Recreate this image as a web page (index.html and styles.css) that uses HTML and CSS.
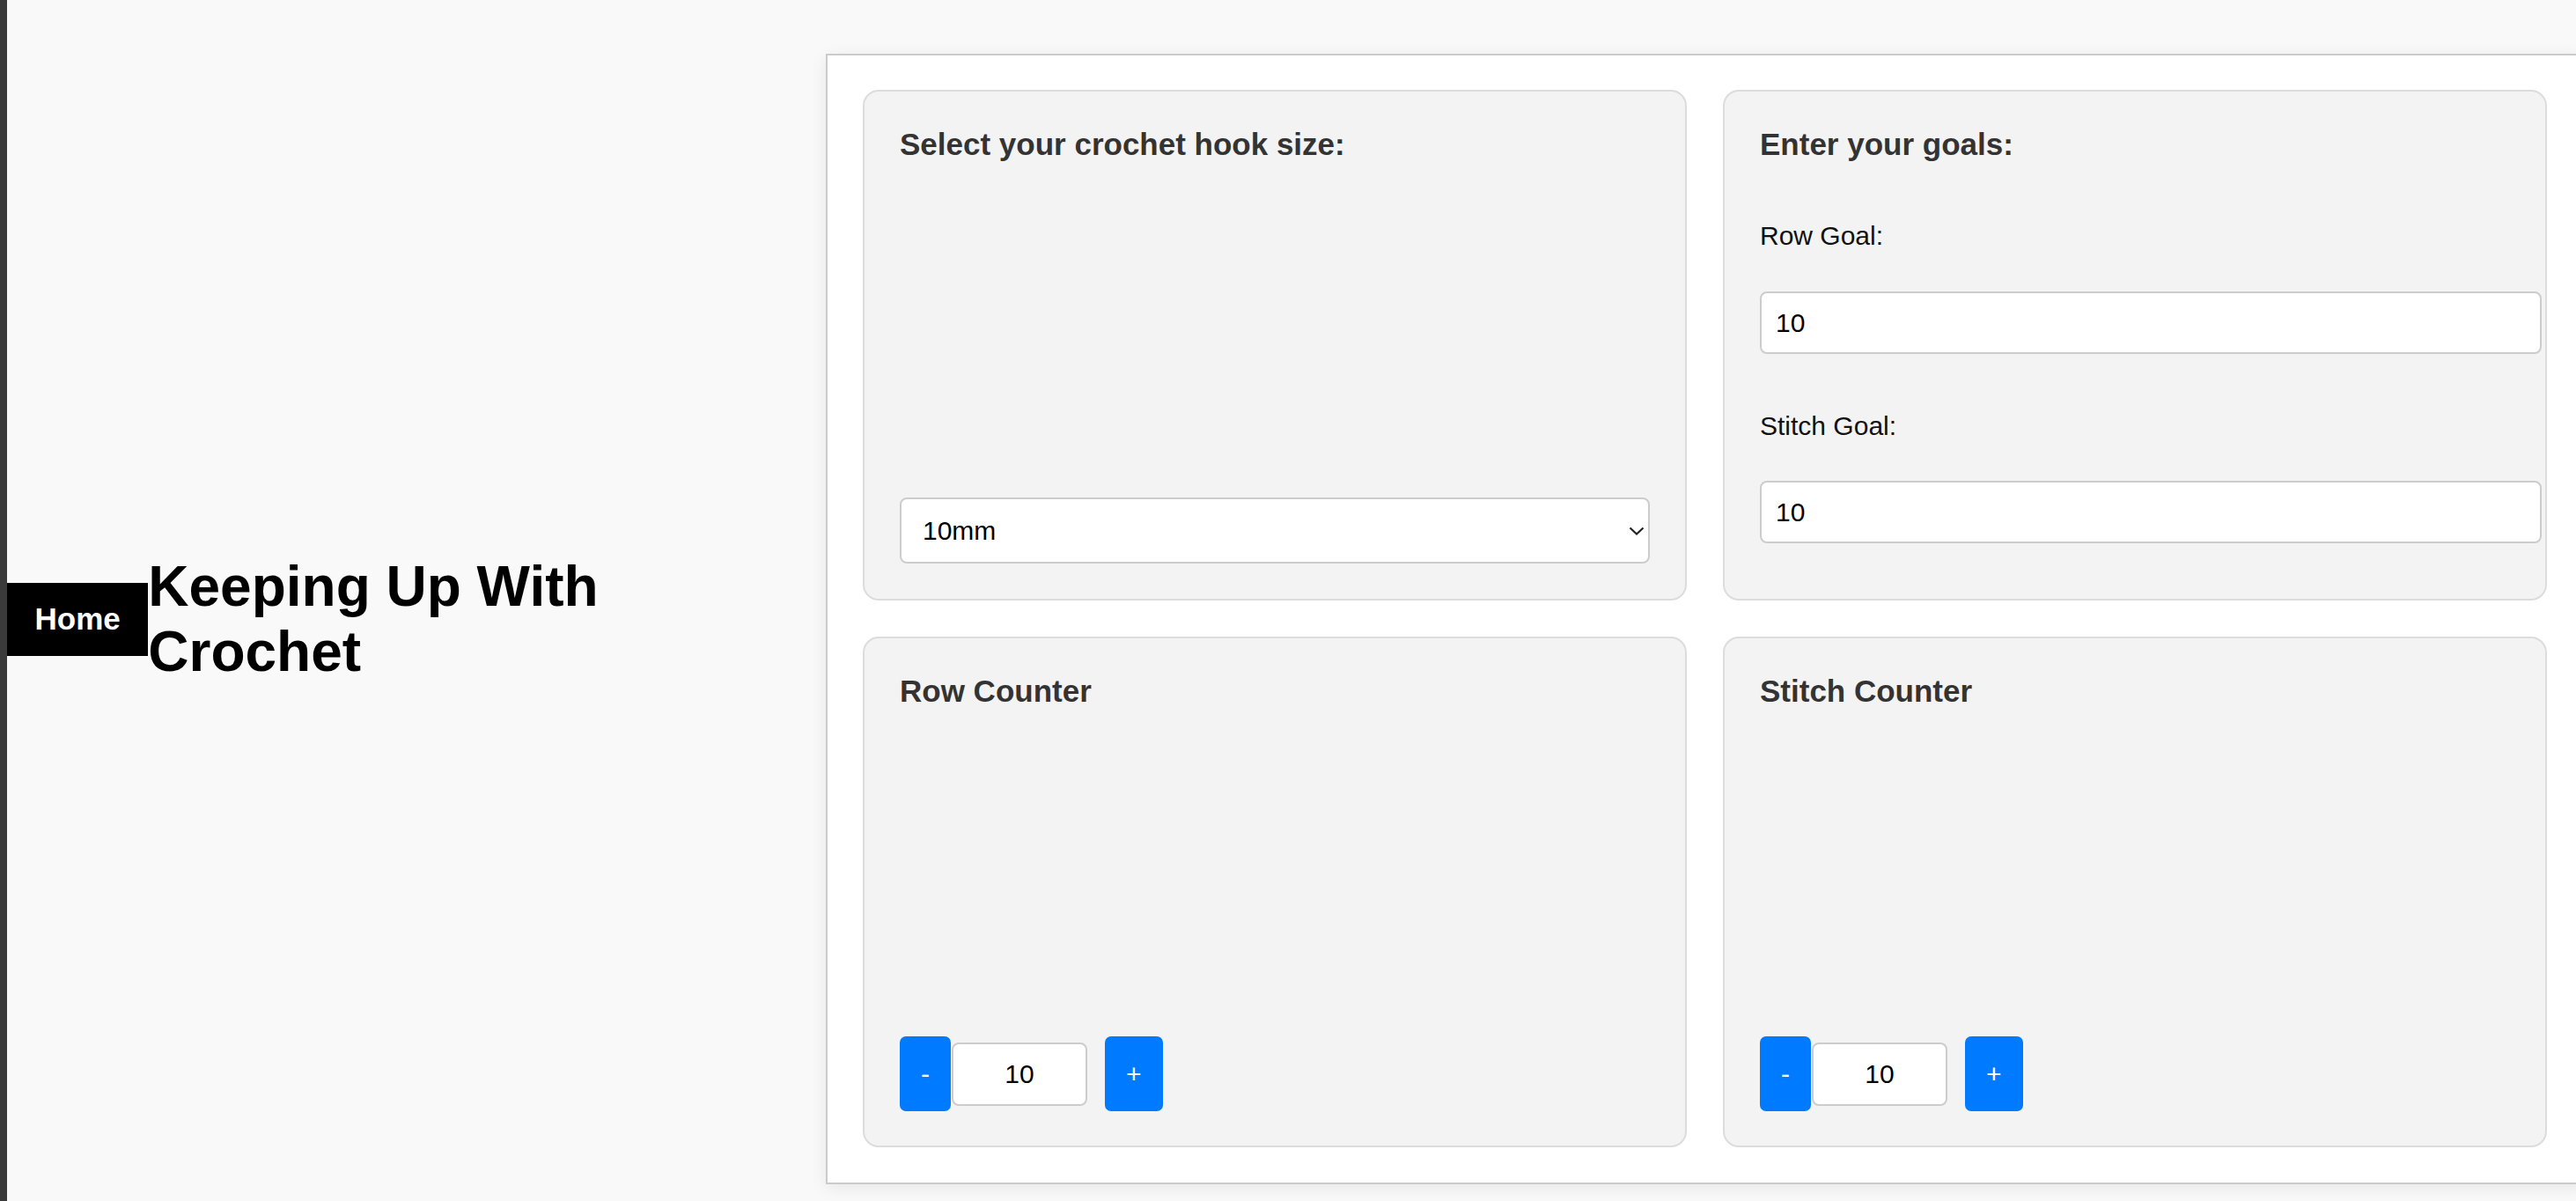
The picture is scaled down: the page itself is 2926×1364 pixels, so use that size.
FILE: index.html
```html
<!DOCTYPE html>
<html lang="en">
<head>
    <meta charset="UTF-8">
    <meta name="viewport" content="width=device-width, initial-scale=1.0">
    <title>Keeping Up With Crochet</title>
    <link rel="stylesheet" href="styles.css">
</head>
<body>
    <div class="page">
        <header class="site-header">
            <a href="#" class="home-link">Home</a>
            <h1 class="site-title">Keeping Up With Crochet</h1>
        </header>

        <main class="tracker">
            <section class="card card-hook">
                <h3>Select your crochet hook size:</h3>
                <div class="select-wrap">
                    <select id="hook" class="hook-select">
                        <option value="2">2mm</option>
                        <option value="3">3mm</option>
                        <option value="4">4mm</option>
                        <option value="5">5mm</option>
                        <option value="6">6mm</option>
                        <option value="8">8mm</option>
                        <option value="10" selected>10mm</option>
                    </select>
                    <svg class="chevron" width="18" height="10" viewBox="0 0 18 10">
                        <polyline points="1.5,1.5 9,8.5 16.5,1.5" fill="none" stroke="#222" stroke-width="2.2"/>
                    </svg>
                </div>
            </section>

            <section class="card card-goals">
                <h3>Enter your goals:</h3>
                <label for="rowGoal">Row Goal:</label>
                <input type="number" id="rowGoal" class="goal-input" value="10">
                <label for="stitchGoal">Stitch Goal:</label>
                <input type="number" id="stitchGoal" class="goal-input" value="10">
            </section>

            <section class="card card-counter">
                <h3>Row Counter</h3>
                <div class="counter">
                    <button type="button" class="count-btn" onclick="changeCount('rowCount', -1)">-</button>
                    <input type="text" id="rowCount" class="count-input" value="10" readonly>
                    <button type="button" class="count-btn" onclick="changeCount('rowCount', 1)">+</button>
                </div>
            </section>

            <section class="card card-counter">
                <h3>Stitch Counter</h3>
                <div class="counter">
                    <button type="button" class="count-btn" onclick="changeCount('stitchCount', -1)">-</button>
                    <input type="text" id="stitchCount" class="count-input" value="10" readonly>
                    <button type="button" class="count-btn" onclick="changeCount('stitchCount', 1)">+</button>
                </div>
            </section>
        </main>
    </div>

    <script>
        // bump a counter up or down, never below zero
        function changeCount(id, step) {
            var field = document.getElementById(id);
            var value = parseInt(field.value) + step;
            if (value < 0) value = 0;
            field.value = value;
        }
    </script>
</body>
</html>
```

FILE: styles.css
```css
html, body {
    margin: 0;
    overflow: hidden;
}
body {
    font-family: Arial, "Liberation Sans", sans-serif;
    background-color: #f9f9f9;
    color: #000;
    border-left: 8px solid #3a3a3a;
    min-height: 1364px;
    box-sizing: border-box;
}
.page {
    display: flex;
    align-items: center;
    padding-top: 61px;
}
.site-header {
    flex: 0 0 930px;
    display: flex;
    align-items: center;
}
.home-link {
    flex-shrink: 0;
    background-color: #000;
    color: #fff;
    text-decoration: none;
    font-weight: bold;
    font-size: 35px;
    padding: 21.5px 31.5px;
}
.site-title {
    margin: 0;
    max-width: 700px;
    font-size: 64px;
    font-weight: bold;
}
.tracker {
    flex: 0 0 1997px;
    box-sizing: border-box;
    display: grid;
    grid-template-columns: 1fr 1fr;
    grid-auto-rows: 1fr;
    gap: 41px;
    padding: 39px 40px 40px;
    background-color: #fff;
    border: 2px solid #cbcbcb;
    box-shadow: 0 4px 18px rgba(0, 0, 0, 0.08);
}
.card {
    display: flex;
    flex-direction: column;
    background-color: #f3f3f3;
    border: 2px solid #dcdcdc;
    border-radius: 18px;
    padding: 40px;
}
.card h3 {
    margin: 0 0 25px;
    font-size: 35px;
    line-height: 40px;
    color: #333;
}
.card-hook,
.card-counter {
    justify-content: space-between;
}
.select-wrap {
    position: relative;
}
.hook-select {
    -webkit-appearance: none;
    appearance: none;
    display: block;
    width: 100%;
    box-sizing: border-box;
    padding: 18px 24px;
    font-family: inherit;
    font-size: 30px;
    line-height: 35px;
    color: #000;
    background-color: #fff;
    border: 2px solid #ccc;
    border-radius: 8px;
}
.chevron {
    position: absolute;
    right: 6px;
    top: 33px;
    pointer-events: none;
}
.card-goals label {
    display: block;
    margin: 42px 0 45px;
    font-size: 30px;
    line-height: 34.5px;
    color: #111;
}
.goal-input {
    display: block;
    width: 100%;
    padding: 16px;
    margin-bottom: 23px;
    font-family: inherit;
    font-size: 30px;
    line-height: 35px;
    color: #000;
    background-color: #fff;
    border: 2px solid #ccc;
    border-radius: 8px;
}
.goal-input::-webkit-inner-spin-button,
.goal-input::-webkit-outer-spin-button {
    -webkit-appearance: none;
    margin: 0;
}
.counter {
    display: flex;
    align-items: center;
    margin-bottom: -1px;
}
.count-btn {
    background-color: #007bff;
    color: #fff;
    border: none;
    border-radius: 7px;
    padding: 25px 24px;
    font-family: inherit;
    font-size: 30px;
    line-height: 35px;
    cursor: pointer;
}
.count-btn:hover {
    background-color: #0069d9;
}
.count-input {
    width: 154px;
    box-sizing: border-box;
    margin: 0 20px 0 1px;
    padding: 16px 8px;
    font-family: inherit;
    font-size: 30px;
    line-height: 36px;
    text-align: center;
    color: #000;
    background-color: #fff;
    border: 2px solid #ccc;
    border-radius: 8px;
}
```
